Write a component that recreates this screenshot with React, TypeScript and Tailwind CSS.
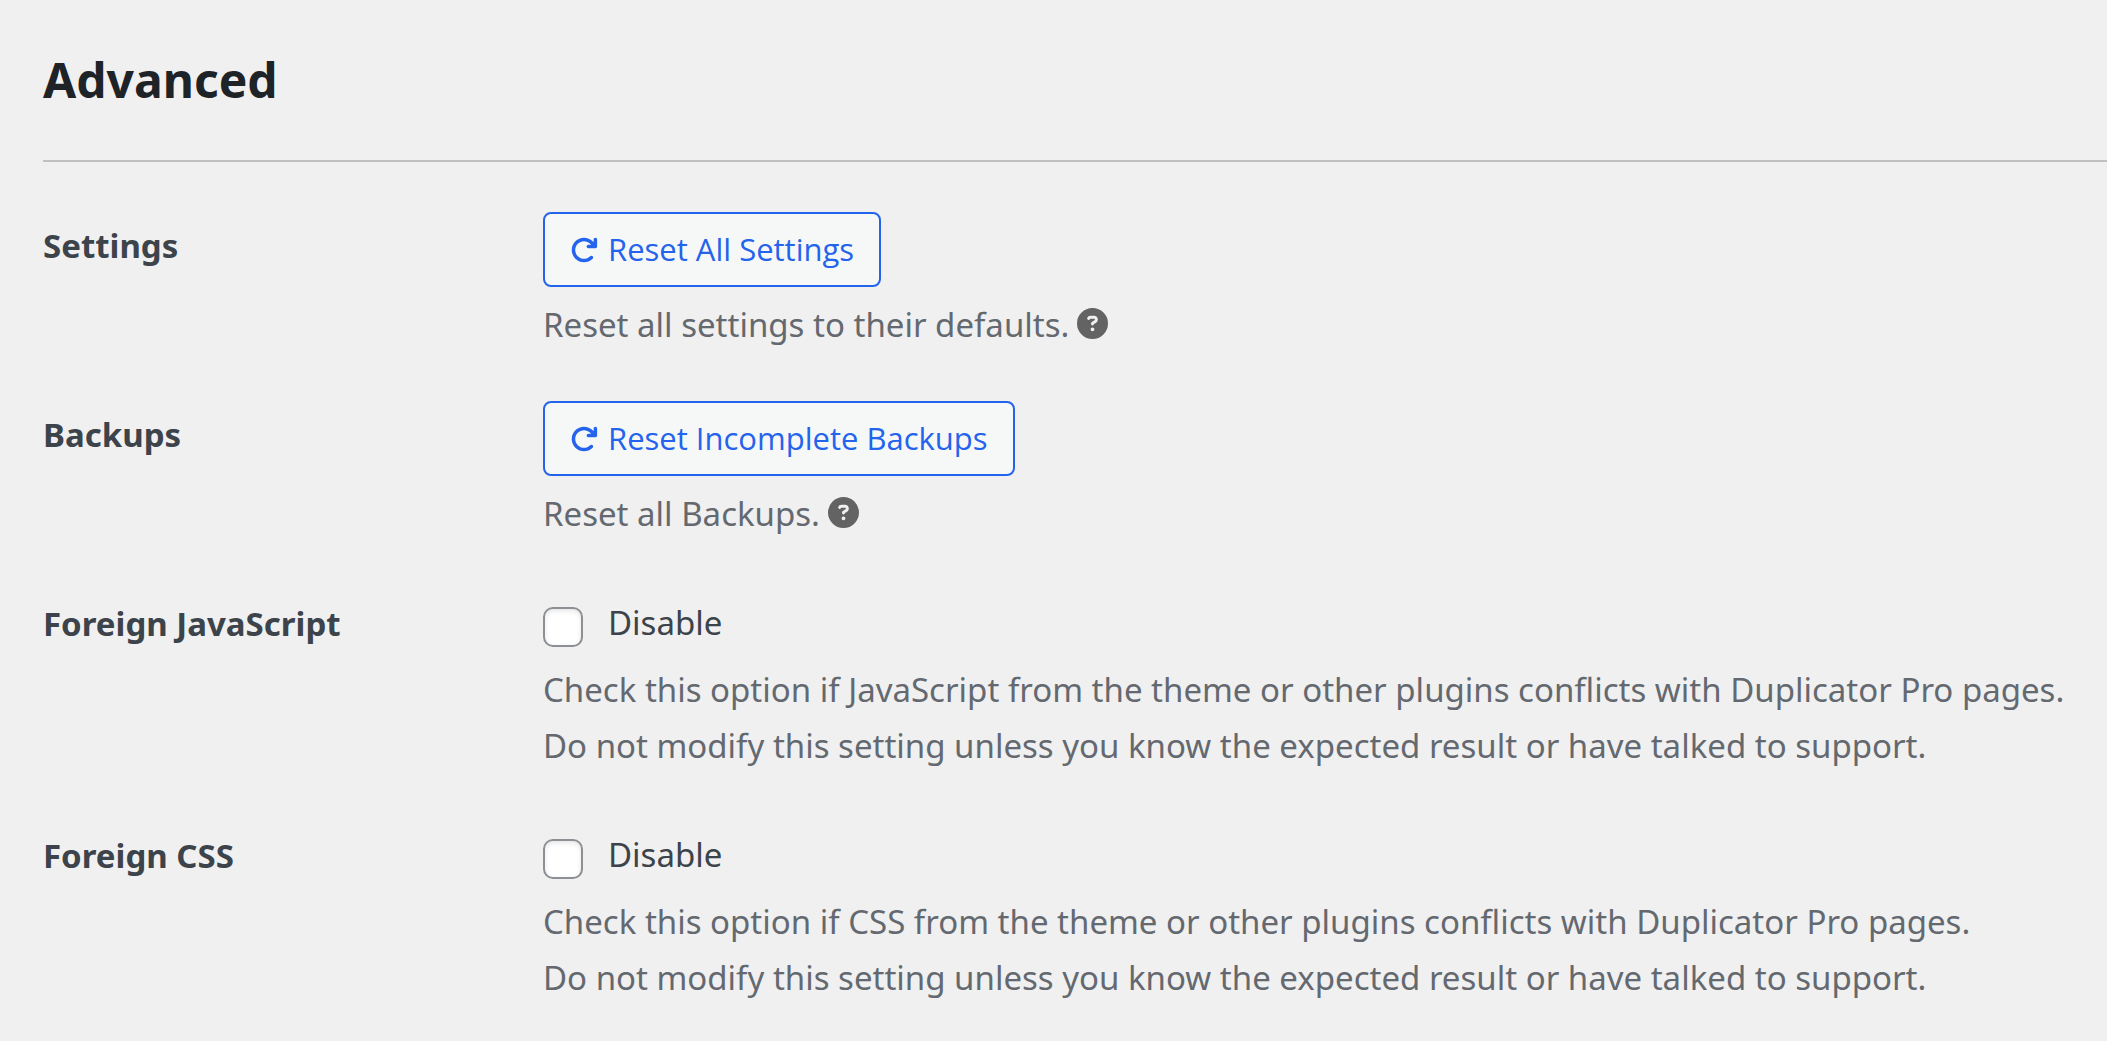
import React, { useState } from 'react';
import { FaArrowRotateRight, FaCircleQuestion } from 'react-icons/fa6';

interface RowProps {
  title: string;
  children: React.ReactNode;
}

const SettingsRow: React.FC<RowProps> = ({ title, children }) => (
  <section className="grid grid-cols-[500px_1fr]">
    <h3 className="pt-2 text-[33px] leading-[52px] font-bold text-[#3c434a]">{title}</h3>
    <div>{children}</div>
  </section>
);

interface ResetActionProps {
  label: string;
  description: string;
}

const ResetAction: React.FC<ResetActionProps> = ({ label, description }) => (
  <>
    <button
      type="button"
      className="flex h-[75px] items-center gap-[10px] rounded-[8px] border-2 border-[#2463eb] bg-[#f6f8f8] px-[25px] font-['Open_Sans',sans-serif] text-[31px] text-[#2463eb]"
    >
      <FaArrowRotateRight className="size-[28px]" />
      {label}
    </button>
    <div className="mt-[10px] flex items-center gap-[8px] text-[33px] leading-[56px] text-[#646970]">
      <p>{description}</p>
      <button type="button" aria-label={`Help: ${label}`} className="pb-1 text-[#636363]">
        <FaCircleQuestion className="size-[31px]" />
      </button>
    </div>
  </>
);

interface DisableOptionProps {
  id: string;
  conflict: string;
}

const DisableOption: React.FC<DisableOptionProps> = ({ id, conflict }) => {
  const [checked, setChecked] = useState(false);

  return (
    <>
      <div className="flex items-center gap-[25px] pt-[7px]">
        <input
          id={id}
          type="checkbox"
          checked={checked}
          onChange={(e) => setChecked(e.target.checked)}
          className="mt-2 size-[40px] appearance-none rounded-[10px] border-2 border-[#8c8f94] bg-white shadow-[inset_0_2px_5px_rgba(0,0,0,0.1)] checked:bg-[#2463eb]"
        />
        <label htmlFor={id} className="text-[33px] leading-[52px] text-[#3c434a]">
          Disable
        </label>
      </div>
      <p className="mt-[13px] text-[33px] leading-[56px] text-[#646970]">
        Check this option if {conflict} from the theme or other plugins conflicts with Duplicator Pro pages.
        <br />
        Do not modify this setting unless you know the expected result or have talked to support.
      </p>
    </>
  );
};

const App: React.FC = () => (
  <main className="min-h-screen bg-[#f0f0f0] pt-[44px] pb-5 pl-[43px] font-['Noto_Sans','Open_Sans',sans-serif]">
    <h2 className="text-[48px] leading-[72px] font-bold text-[#1d2327]">Advanced</h2>
    <hr className="mt-[44px] border-t-2 border-[#c0c0c0]" />
    <div className="mt-[50px] flex flex-col gap-[48px]">
      <SettingsRow title="Settings">
        <ResetAction label="Reset All Settings" description="Reset all settings to their defaults." />
      </SettingsRow>
      <SettingsRow title="Backups">
        <ResetAction label="Reset Incomplete Backups" description="Reset all Backups." />
      </SettingsRow>
      <SettingsRow title="Foreign JavaScript">
        <DisableOption id="disable-js" conflict="JavaScript" />
      </SettingsRow>
      <SettingsRow title="Foreign CSS">
        <DisableOption id="disable-css" conflict="CSS" />
      </SettingsRow>
    </div>
  </main>
);

export default App;
